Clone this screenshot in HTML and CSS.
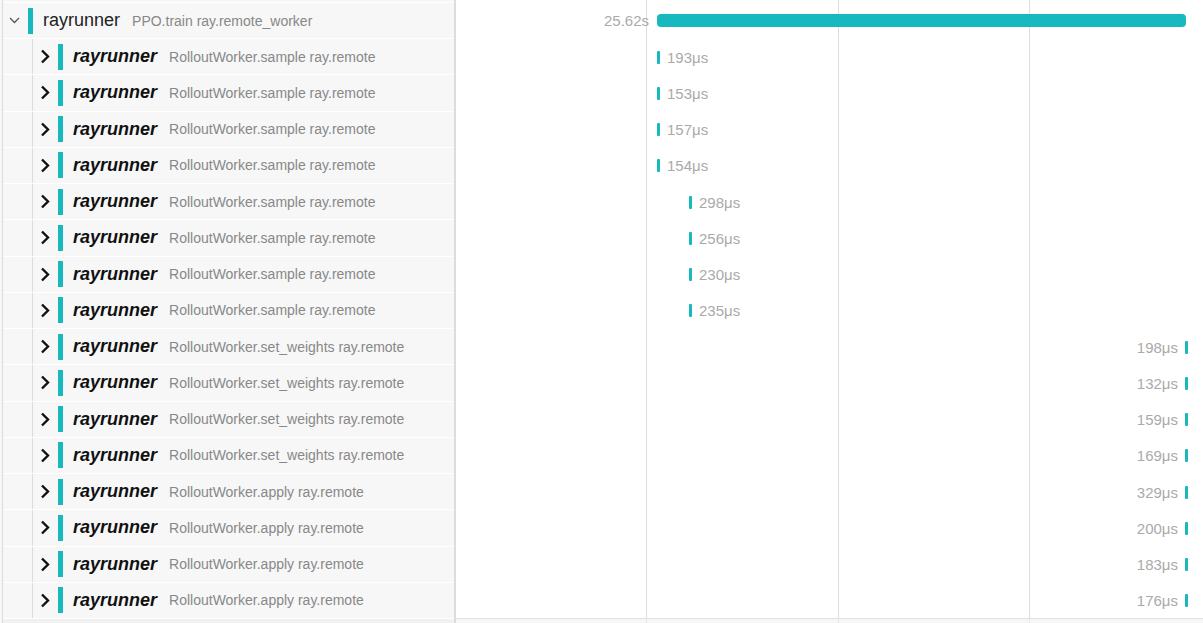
FILE: index.html
```html
<!DOCTYPE html>
<html>
<head>
<meta charset="utf-8">
<link rel="stylesheet" href="styles.css">
</head>
<body>
<div class="view">
  <div class="tree">
    <div class="row head">
      <svg class="chev-down" width="11" height="7" viewBox="0 0 11 7"><path d="M1 1 L5.5 5.5 L10 1" fill="none" stroke="#555" stroke-width="1.3"/></svg>
      <span class="mark"></span>
      <span class="name">rayrunner</span>
      <span class="op">PPO.train ray.remote_worker</span>
    </div>
    <div class="row child"><div class="inner"><svg class="chev" width="10" height="15" viewBox="0 0 10 15"><path d="M2 1.5 L8 7.5 L2 13.5" fill="none" stroke="#111" stroke-width="2.4"/></svg><span class="mark"></span><span class="cname">rayrunner</span><span class="op">RolloutWorker.sample ray.remote</span></div></div>
    <div class="row child"><div class="inner"><svg class="chev" width="10" height="15" viewBox="0 0 10 15"><path d="M2 1.5 L8 7.5 L2 13.5" fill="none" stroke="#111" stroke-width="2.4"/></svg><span class="mark"></span><span class="cname">rayrunner</span><span class="op">RolloutWorker.sample ray.remote</span></div></div>
    <div class="row child"><div class="inner"><svg class="chev" width="10" height="15" viewBox="0 0 10 15"><path d="M2 1.5 L8 7.5 L2 13.5" fill="none" stroke="#111" stroke-width="2.4"/></svg><span class="mark"></span><span class="cname">rayrunner</span><span class="op">RolloutWorker.sample ray.remote</span></div></div>
    <div class="row child"><div class="inner"><svg class="chev" width="10" height="15" viewBox="0 0 10 15"><path d="M2 1.5 L8 7.5 L2 13.5" fill="none" stroke="#111" stroke-width="2.4"/></svg><span class="mark"></span><span class="cname">rayrunner</span><span class="op">RolloutWorker.sample ray.remote</span></div></div>
    <div class="row child"><div class="inner"><svg class="chev" width="10" height="15" viewBox="0 0 10 15"><path d="M2 1.5 L8 7.5 L2 13.5" fill="none" stroke="#111" stroke-width="2.4"/></svg><span class="mark"></span><span class="cname">rayrunner</span><span class="op">RolloutWorker.sample ray.remote</span></div></div>
    <div class="row child"><div class="inner"><svg class="chev" width="10" height="15" viewBox="0 0 10 15"><path d="M2 1.5 L8 7.5 L2 13.5" fill="none" stroke="#111" stroke-width="2.4"/></svg><span class="mark"></span><span class="cname">rayrunner</span><span class="op">RolloutWorker.sample ray.remote</span></div></div>
    <div class="row child"><div class="inner"><svg class="chev" width="10" height="15" viewBox="0 0 10 15"><path d="M2 1.5 L8 7.5 L2 13.5" fill="none" stroke="#111" stroke-width="2.4"/></svg><span class="mark"></span><span class="cname">rayrunner</span><span class="op">RolloutWorker.sample ray.remote</span></div></div>
    <div class="row child"><div class="inner"><svg class="chev" width="10" height="15" viewBox="0 0 10 15"><path d="M2 1.5 L8 7.5 L2 13.5" fill="none" stroke="#111" stroke-width="2.4"/></svg><span class="mark"></span><span class="cname">rayrunner</span><span class="op">RolloutWorker.sample ray.remote</span></div></div>
    <div class="row child"><div class="inner"><svg class="chev" width="10" height="15" viewBox="0 0 10 15"><path d="M2 1.5 L8 7.5 L2 13.5" fill="none" stroke="#111" stroke-width="2.4"/></svg><span class="mark"></span><span class="cname">rayrunner</span><span class="op">RolloutWorker.set_weights ray.remote</span></div></div>
    <div class="row child"><div class="inner"><svg class="chev" width="10" height="15" viewBox="0 0 10 15"><path d="M2 1.5 L8 7.5 L2 13.5" fill="none" stroke="#111" stroke-width="2.4"/></svg><span class="mark"></span><span class="cname">rayrunner</span><span class="op">RolloutWorker.set_weights ray.remote</span></div></div>
    <div class="row child"><div class="inner"><svg class="chev" width="10" height="15" viewBox="0 0 10 15"><path d="M2 1.5 L8 7.5 L2 13.5" fill="none" stroke="#111" stroke-width="2.4"/></svg><span class="mark"></span><span class="cname">rayrunner</span><span class="op">RolloutWorker.set_weights ray.remote</span></div></div>
    <div class="row child"><div class="inner"><svg class="chev" width="10" height="15" viewBox="0 0 10 15"><path d="M2 1.5 L8 7.5 L2 13.5" fill="none" stroke="#111" stroke-width="2.4"/></svg><span class="mark"></span><span class="cname">rayrunner</span><span class="op">RolloutWorker.set_weights ray.remote</span></div></div>
    <div class="row child"><div class="inner"><svg class="chev" width="10" height="15" viewBox="0 0 10 15"><path d="M2 1.5 L8 7.5 L2 13.5" fill="none" stroke="#111" stroke-width="2.4"/></svg><span class="mark"></span><span class="cname">rayrunner</span><span class="op">RolloutWorker.apply ray.remote</span></div></div>
    <div class="row child"><div class="inner"><svg class="chev" width="10" height="15" viewBox="0 0 10 15"><path d="M2 1.5 L8 7.5 L2 13.5" fill="none" stroke="#111" stroke-width="2.4"/></svg><span class="mark"></span><span class="cname">rayrunner</span><span class="op">RolloutWorker.apply ray.remote</span></div></div>
    <div class="row child"><div class="inner"><svg class="chev" width="10" height="15" viewBox="0 0 10 15"><path d="M2 1.5 L8 7.5 L2 13.5" fill="none" stroke="#111" stroke-width="2.4"/></svg><span class="mark"></span><span class="cname">rayrunner</span><span class="op">RolloutWorker.apply ray.remote</span></div></div>
    <div class="row child"><div class="inner"><svg class="chev" width="10" height="15" viewBox="0 0 10 15"><path d="M2 1.5 L8 7.5 L2 13.5" fill="none" stroke="#111" stroke-width="2.4"/></svg><span class="mark"></span><span class="cname">rayrunner</span><span class="op">RolloutWorker.apply ray.remote</span></div></div>
    <div class="foot"></div>
  </div>
  <div class="timeline">
    <div class="trow head">
      <div class="span left" style="left:149px"><span class="dur">25.62s</span><span class="bigbar" style="width:529px"></span></div>
    </div>
    <div class="trow"><div class="span" style="left:201px"><span class="tick"></span><span class="dur">193μs</span></div></div>
    <div class="trow"><div class="span" style="left:201px"><span class="tick"></span><span class="dur">153μs</span></div></div>
    <div class="trow"><div class="span" style="left:201px"><span class="tick"></span><span class="dur">157μs</span></div></div>
    <div class="trow"><div class="span" style="left:201px"><span class="tick"></span><span class="dur">154μs</span></div></div>
    <div class="trow"><div class="span" style="left:233px"><span class="tick"></span><span class="dur">298μs</span></div></div>
    <div class="trow"><div class="span" style="left:233px"><span class="tick"></span><span class="dur">256μs</span></div></div>
    <div class="trow"><div class="span" style="left:233px"><span class="tick"></span><span class="dur">230μs</span></div></div>
    <div class="trow"><div class="span" style="left:233px"><span class="tick"></span><span class="dur">235μs</span></div></div>
    <div class="trow"><div class="span rev" style="right:15px"><span class="tick"></span><span class="dur">198μs</span></div></div>
    <div class="trow"><div class="span rev" style="right:15px"><span class="tick"></span><span class="dur">132μs</span></div></div>
    <div class="trow"><div class="span rev" style="right:15px"><span class="tick"></span><span class="dur">159μs</span></div></div>
    <div class="trow"><div class="span rev" style="right:15px"><span class="tick"></span><span class="dur">169μs</span></div></div>
    <div class="trow"><div class="span rev" style="right:15px"><span class="tick"></span><span class="dur">329μs</span></div></div>
    <div class="trow"><div class="span rev" style="right:15px"><span class="tick"></span><span class="dur">200μs</span></div></div>
    <div class="trow"><div class="span rev" style="right:15px"><span class="tick"></span><span class="dur">183μs</span></div></div>
    <div class="trow"><div class="span rev" style="right:15px"><span class="tick"></span><span class="dur">176μs</span></div></div>
    <div class="foot"></div>
  </div>
</div>
</body>
</html>
```
FILE: styles.css
```css
html, body {
  margin: 0;
  padding: 0;
  background: #fff;
  height: 100%;
  overflow: hidden;
}
body {
  font-family: "Liberation Sans", Arial, sans-serif;
}
.view {
  display: flex;
  width: 1203px;
  height: 623px;
}
.tree {
  width: 452px;
  flex: none;
  background: #f7f7f7;
  padding-left: 2px;
  padding-top: 2px;
  border-right: 2px solid #dcdcdc;
  position: relative;
  background-image: linear-gradient(#dcdcdc, #dcdcdc);
  background-size: 1px 100%;
  background-position: 2px 0;
  background-repeat: no-repeat;
}
.row {
  box-sizing: border-box;
  border-top: 1px solid #fff;
  margin-left: 1px;
  display: flex;
  align-items: center;
}
.row.head {
  height: 36px;
  padding-left: 6px;
}
.chev-down {
  display: block;
  flex: none;
}
.mark {
  width: 5px;
  height: 26px;
  background: #17b8be;
  flex: none;
}
.row.head .mark {
  margin-left: 8px;
}
.name {
  margin-left: 10px;
  font-size: 18px;
  color: #222;
}
.op {
  margin-left: 12px;
  font-size: 14px;
  color: #888;
  white-space: nowrap;
}
.row.child {
  height: 36.25px;
  align-items: stretch;
}
.inner {
  margin-left: 29px;
  border-left: 1px solid #dcdcdc;
  display: flex;
  align-items: center;
  padding-left: 7px;
  flex: 1;
}
.chev {
  display: block;
  flex: none;
}
.row.child .mark {
  margin-left: 8px;
}
.cname {
  margin-left: 10px;
  font-size: 18px;
  font-weight: bold;
  font-style: italic;
  color: #111;
}
.tree .foot {
  border-top: 1px solid #fff;
  height: 5px;
  margin-left: 1px;
  background: #f1f1f1;
}
.timeline {
  flex: 1;
  position: relative;
  background-image:
    linear-gradient(#dedede, #dedede),
    linear-gradient(#dedede, #dedede),
    linear-gradient(#dedede, #dedede);
  background-size: 1px 100%, 1px 100%, 1px 100%;
  background-position: 190px 0, 382px 0, 573px 0;
  background-repeat: no-repeat;
}
.trow {
  position: relative;
  box-sizing: border-box;
  height: 36.25px;
}
.trow.head {
  height: 38px;
}
.span {
  position: absolute;
  top: 2px;
  bottom: 0;
  display: flex;
  align-items: center;
}
.span.rev {
  flex-direction: row-reverse;
}
.trow.head .span {
  top: 2px;
}
.tick {
  width: 3px;
  height: 13px;
  border-radius: 1px;
  background: #17b8be;
  flex: none;
}
.dur {
  font-size: 15px;
  color: #aaa;
  margin-left: 7px;
  white-space: nowrap;
}
.span.rev .dur {
  margin-left: 0;
  margin-right: 7px;
}
.span.left {
  width: 581px;
  justify-content: flex-end;
}
.span.left .dur {
  margin: 0 8px 0 0;
}
.bigbar {
  height: 13px;
  border-radius: 4px;
  background: #17b8be;
  flex: none;
}
.timeline .foot {
  border-top: 1px solid #e0e0e0;
  height: 5px;
  background: rgba(240, 240, 240, 0.6);
}
```
